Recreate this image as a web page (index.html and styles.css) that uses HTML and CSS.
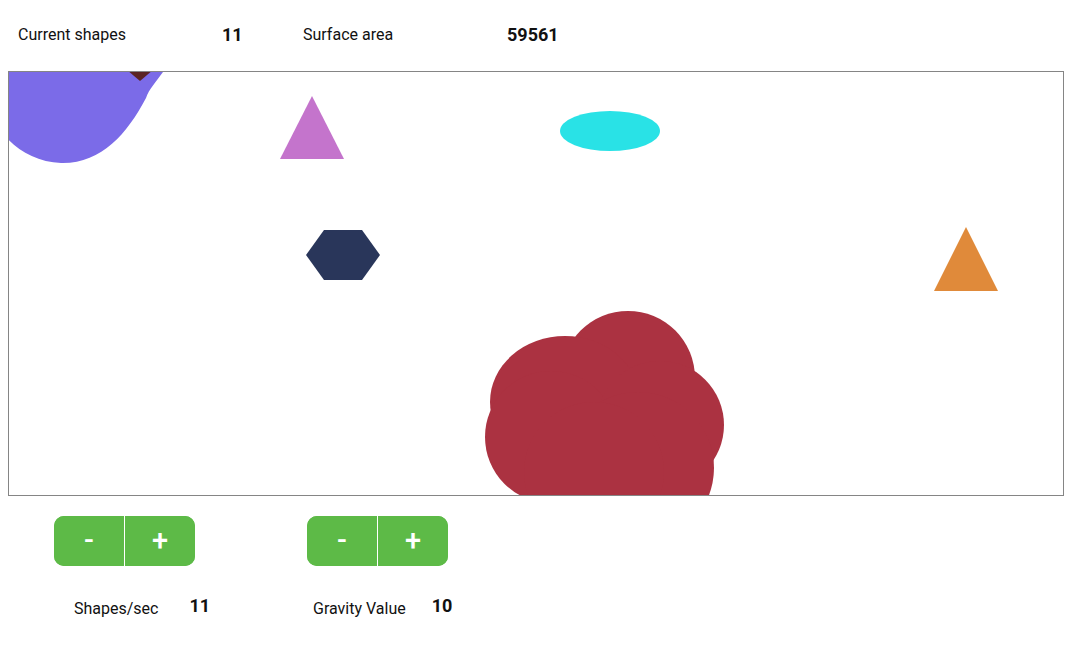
FILE: index.html
```html
<!DOCTYPE html>
<html>
<head>
<meta charset="utf-8">
<link rel="stylesheet" href="styles.css">
</head>
<body>
<div class="stats">
  <span class="stat-label">Current shapes</span>
  <span class="stat-value">11</span>
  <span class="stat-label">Surface area</span>
  <span class="stat-value">59561</span>
</div>
<div class="canvas">
  <svg class="scene" width="1054" height="423" viewBox="0 0 1054 423">
    <path fill="#7b6be8" d="M -10 -10 L 160 -10 L 154 0 C 147 10 140 17 137 26 C 118 62 92 92 52 91 C 30 90 10 80 -2 66 L -10 66 Z"/>
    <polygon fill="#5b2424" points="118,-2 144,-2 131,9"/>
    <polygon fill="#c474cc" points="303,24 271,87 335,87"/>
    <ellipse fill="#29e2e6" cx="601" cy="59" rx="50" ry="20"/>
    <polygon fill="#29365a" points="297,183 315,158 353,158 371,183 353,208 315,208"/>
    <polygon fill="#e08a3a" points="957,155 925,219 989,219"/>
    <g fill="#ab3241">
      <circle cx="619" cy="306" r="67"/>
      <ellipse cx="556" cy="330" rx="75" ry="66"/>
      <circle cx="542" cy="365" r="66"/>
      <circle cx="651" cy="353" r="64"/>
      <circle cx="629" cy="396" r="76"/>
      <circle cx="585" cy="400" r="70"/>
    </g>
  </svg>
</div>
<div class="controls">
  <div class="control control-rate">
    <div class="stepper">
      <button class="step">-</button>
      <button class="step">+</button>
    </div>
    <div class="readout readout-rate">
      <span class="readout-label">Shapes/sec</span>
      <span class="readout-value">11</span>
    </div>
  </div>
  <div class="control control-gravity">
    <div class="stepper">
      <button class="step">-</button>
      <button class="step">+</button>
    </div>
    <div class="readout readout-gravity">
      <span class="readout-label">Gravity Value</span>
      <span class="readout-value">10</span>
    </div>
  </div>
</div>
</body>
</html>
```

FILE: styles.css
```css
html, body {
  background: #ffffff;
}
body {
  margin: 8px;
  font-family: Roboto, "Liberation Sans", sans-serif;
  color: #111111;
}
.stats {
  display: flex;
  align-items: center;
  height: 52px;
  margin-bottom: 11px;
  padding-left: 10px;
}
.stat-label {
  font-size: 16px;
  width: 204px;
}
.stat-value {
  font-size: 18px;
  font-weight: 700;
  width: 81px;
}
.canvas {
  width: 1054px;
  height: 423px;
  border: 1px solid #858585;
  overflow: hidden;
}
.scene {
  display: block;
}
.controls {
  display: flex;
  margin-top: 20px;
}
.control {
  display: flex;
  flex-direction: column;
}
.control-rate {
  margin-left: 46px;
  width: 253px;
}
.stepper {
  display: flex;
  width: 141px;
  height: 50px;
  border-radius: 10px;
  overflow: hidden;
  background: #5dba47;
}
.step {
  flex: 1;
  border: none;
  background: #5dba47;
  color: #ffffff;
  font-family: Roboto, "Liberation Sans", sans-serif;
  font-size: 29px;
  font-weight: 500;
  line-height: 1;
  padding: 0 0 2px;
  margin: 0;
}
.step + .step {
  border-left: 1px solid #ffffff;
}
.readout {
  display: flex;
  align-items: center;
  margin-top: 30px;
}
.readout-rate {
  padding-left: 20px;
  gap: 31px;
}
.readout-gravity {
  padding-left: 6px;
  gap: 26px;
}
.readout-label {
  font-size: 16px;
  position: relative;
  top: 2px;
}
.readout-value {
  font-size: 18px;
  font-weight: 700;
  position: relative;
  top: -1px;
}
```
